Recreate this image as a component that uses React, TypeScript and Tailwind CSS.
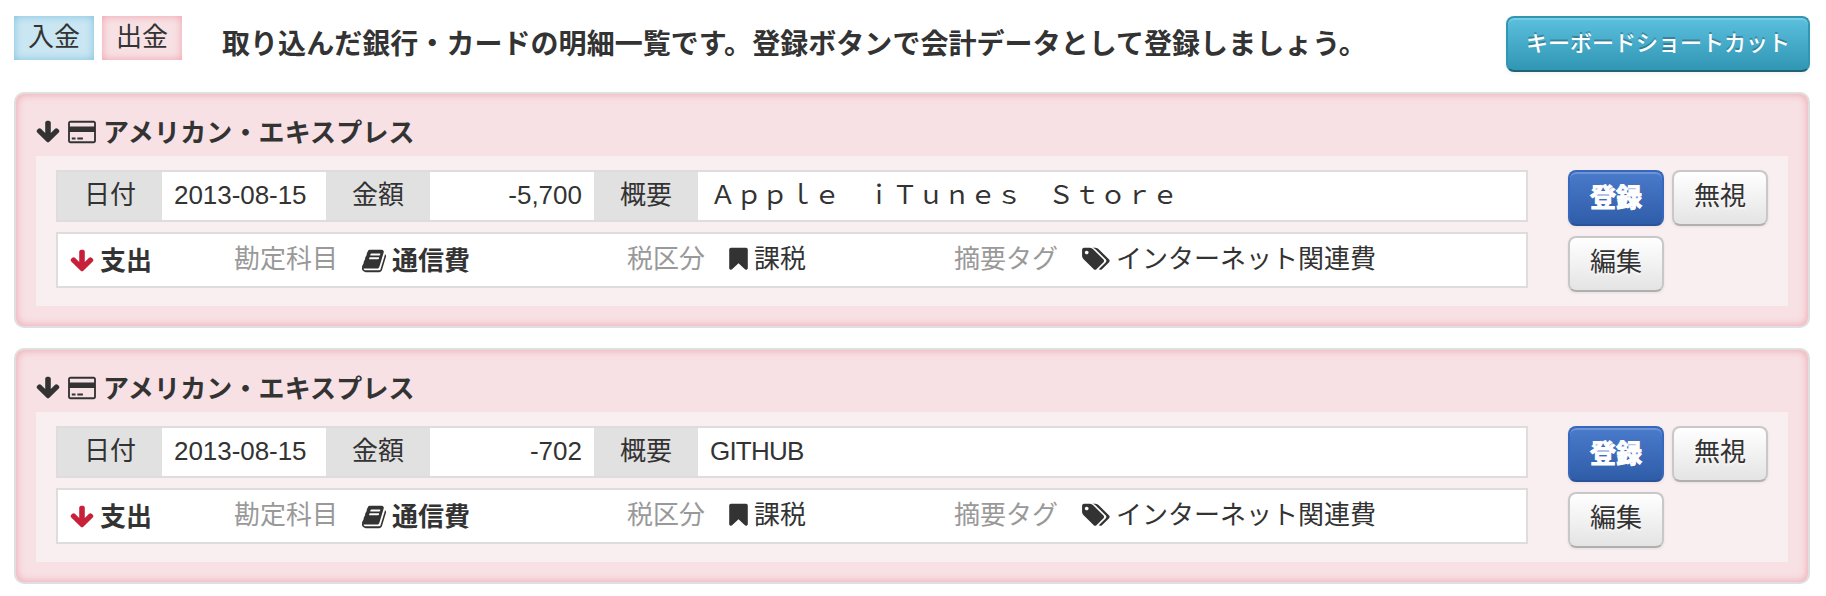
import type { ReactNode } from "react";

type IconProps = { className?: string };

function ArrowDownIcon({ className }: IconProps) {
  return (
    <svg viewBox="0 0 1792 1792" fill="currentColor" className={className}>
      <path d="M1675 832q0 53-37 90l-651 652q-39 37-91 37-53 0-90-37l-651-652q-38-36-38-90 0-53 38-91l74-75q39-37 91-37 53 0 90 37l294 294v-704q0-52 38-90t90-38h128q52 0 90 38t38 90v704l294-294q37-37 90-37 52 0 91 37l75 75q37 39 37 91z" />
    </svg>
  );
}

function CreditCardIcon({ className }: IconProps) {
  return (
    <svg viewBox="0 0 1920 1792" fill="currentColor" className={className}>
      <path d="M1760 128q66 0 113 47t47 113v1216q0 66-47 113t-113 47h-1600q-66 0-113-47t-47-113v-1216q0-66 47-113t113-47h1600zm-1600 128q-13 0-22.500 9.500t-9.500 22.500v224h1664v-224q0-13-9.500-22.500t-22.500-9.500h-1600zm1600 1280q13 0 22.500-9.500t9.500-22.500v-608h-1664v608q0 13 9.500 22.500t22.500 9.500h1600zm-1504-128v-128h256v128h-256zm384 0v-128h384v128h-384z" />
    </svg>
  );
}

function BookIcon({ className }: IconProps) {
  return (
    <svg viewBox="0 0 1792 1792" fill="currentColor" className={className}>
      <path d="M1703 478q40 57 18 129l-275 906q-19 64-76.500 107.500t-122.500 43.500h-923q-77 0-148.500-53.500t-99.500-131.500q-24-67-2-127 0-4 3-27t4-37q1-8-3-21.500t-3-19.500q2-11 8-21t16.500-23.500 16.500-23.500q23-38 45-91.500t30-91.500q3-10 .5-30t-.5-28q3-11 17-28t17-23q21-36 42-92t25-90q1-9-2.500-32t.5-28q4-13 22-30.500t22-22.500q19-26 42.500-84.500t27.500-96.500q1-8-3-25.500t-2-26.500q2-8 9-18t18-23 17-21q8-12 16.500-30.500t15-35 16-36 19.500-32 26.500-23.500 36-11.500 47.500 5.500l-1 3q38-9 51-9h761q74 0 114 56t18 130l-274 906q-36 119-71.500 153.500t-128.500 34.500h-869q-27 0-38 15-11 16-1 43 24 70 144 70h923q29 0 56-15.500t35-41.500l300-987q7-22 5-57 38 15 59 43zm-1064 2q-4 13 2 22.500t20 9.500h608q13 0 25.500-9.500t16.500-22.500l21-64q4-13-2-22.500t-20-9.500h-608q-13 0-25.500 9.500t-16.500 22.500zm-83 256q-4 13 2 22.500t20 9.500h608q13 0 25.500-9.500t16.500-22.500l21-64q4-13-2-22.500t-20-9.500h-608q-13 0-25.500 9.500t-16.500 22.500z" />
    </svg>
  );
}

function BookmarkIcon({ className }: IconProps) {
  return (
    <svg viewBox="256 0 1280 1792" fill="currentColor" className={className}>
      <path d="M1420 128q23 0 44 9 33 13 52.500 41t19.500 62v1289q0 34-19.500 62t-52.500 41q-19 8-44 8-48 0-83-32l-441-424-441 424q-36 33-83 33-23 0-44-9-33-13-52.500-41t-19.500-62v-1289q0-34 19.500-62t52.500-41q21-9 44-9h1048z" />
    </svg>
  );
}

function TagsIcon({ className }: IconProps) {
  return (
    <svg viewBox="128 0 1920 1792" fill="currentColor" className={className}>
      <path d="M576 448q0-53-37.500-90.500t-90.500-37.500-90.500 37.500-37.500 90.500 37.500 90.500 90.500 37.500 90.500-37.500 37.500-90.500zm1067 576q0 53-37 90l-491 492q-39 37-91 37-53 0-90-37l-715-716q-38-37-64.500-101t-26.500-117v-416q0-52 38-90t90-38h416q53 0 117 26.500t102 64.500l715 714q37 39 37 91zm384 0q0 53-37 90l-491 492q-39 37-91 37-36 0-59-14t-53-45l470-470q37-37 37-90 0-52-37-91l-715-714q-38-38-102-64.500t-117-26.500h224q53 0 117 26.500t102 64.500l715 714q37 39 37 91z" />
    </svg>
  );
}

function HeaderCell({ children }: { children: ReactNode }) {
  return (
    <div className="flex w-[104px] shrink-0 justify-center bg-[#e1e1e1] leading-[46px]">
      {children}
    </div>
  );
}

function PlainButton({ children }: { children: ReactNode }) {
  return (
    <button className="flex h-14 w-24 justify-center rounded-lg border-2 border-[#c8c8c8] border-b-[#b0b0b0] bg-linear-to-b from-white to-[#e4e4e4] leading-[48px] shadow-[0_1px_3px_rgba(0,0,0,0.08)] [text-shadow:0_2px_2px_rgba(255,255,255,0.75)]">
      {children}
    </button>
  );
}

type Entry = { date: string; amount: string; summary: string };

const entries: Entry[] = [
  { date: "2013-08-15", amount: "-5,700", summary: "Ａｐｐｌｅ　ｉＴｕｎｅｓ　Ｓｔｏｒｅ" },
  { date: "2013-08-15", amount: "-702", summary: "GITHUB" },
];

function EntryCard({ entry }: { entry: Entry }) {
  return (
    <section className="h-[236px] rounded-[10px] border-2 border-[#dfdfdf] bg-[#f7e1e4] px-5 pb-5 shadow-[inset_0_0_8px_#f09fab]">
      <h2 className="flex h-[62px] items-start pt-[18px] font-bold leading-[42px]">
        <ArrowDownIcon className="mt-[7px] h-[26px] w-[26px] -ml-px" />
        <CreditCardIcon className="mt-[7px] ml-[7px] h-[26px] w-7" />
        <span className="ml-[7px] tracking-[0.15px]">アメリカン・エキスプレス</span>
      </h2>
      <div className="flex h-[150px] bg-[#f9eff1] pl-5 pt-[14px]">
        <div className="w-[1472px] shrink-0">
          <div className="flex h-[52px] border-2 border-[#dddddd] bg-white">
            <HeaderCell>日付</HeaderCell>
            <div className="w-[164px] pl-3 leading-[46px] tracking-[-0.05px]">{entry.date}</div>
            <HeaderCell>金額</HeaderCell>
            <div className="w-[164px] pr-3 text-right leading-[46px]">{entry.amount}</div>
            <HeaderCell>概要</HeaderCell>
            <div className="grow pl-3 leading-[46px]">
              <span className={entry.summary === "GITHUB" ? "tracking-[-0.8px]" : ""}>{entry.summary}</span>
            </div>
          </div>
          <div className="mt-[10px] flex h-14 border-2 border-[#dddddd] bg-white leading-[50px]">
            <div className="flex w-[176px] pl-[11px] font-bold leading-[54px]">
              <ArrowDownIcon className="mt-[14px] h-[26px] w-[26px] text-[#c9203a]" />
              <span className="ml-[5px]">支出</span>
            </div>
            <div className="flex w-[393px]">
              <span className="text-[#999999]">勘定科目</span>
              <BookIcon className="mt-[14px] ml-[23px] h-[26px] w-[26px]" />
              <span className="ml-[5px] font-bold leading-[54px]">通信費</span>
            </div>
            <div className="flex w-[327px]">
              <span className="text-[#999999]">税区分</span>
              <BookmarkIcon className="mt-3 ml-6 h-[26px] w-[19px]" />
              <span className="ml-[6px]">課税</span>
            </div>
            <div className="flex">
              <span className="text-[#999999]">摘要タグ</span>
              <TagsIcon className="mt-3 ml-6 h-[26px] w-7" />
              <span className="ml-[6px]">インターネット関連費</span>
            </div>
          </div>
        </div>
        <div className="ml-10 flex w-[200px] flex-wrap content-start gap-x-2 gap-y-[10px]">
          <button className="h-14 w-24 rounded-lg border-2 border-[#3669bd] border-b-[#2a539b] bg-linear-to-b from-[#4a7acb] to-[#305da8] font-bold leading-[52px] text-white shadow-[inset_0_2px_0_rgba(255,255,255,0.2),0_1px_3px_rgba(0,0,0,0.08)] [-webkit-text-stroke:1px_white]">
            登録
          </button>
          <PlainButton>無視</PlainButton>
          <PlainButton>編集</PlainButton>
        </div>
      </div>
    </section>
  );
}

export default function App() {
  return (
    <main className="h-[596px] bg-white px-4 pl-[14px] pt-4 font-['Liberation_Sans','Noto_Sans_CJK_JP',sans-serif] text-[26px] text-[#333333]">
      <header className="flex h-[76px] items-start whitespace-nowrap">
        <span className="h-11 w-20 bg-[#cae6f2] text-center leading-[42px] shadow-[inset_0_0_8px_#7fc1df]">
          入金
        </span>
        <span className="ml-2 h-11 w-20 bg-[#f7e1e4] text-center leading-[42px] shadow-[inset_0_0_8px_#f09fab]">
          出金
        </span>
        <h1 className="ml-10 text-[28px] font-bold leading-[58px] tracking-[0.05px]">
          取り込んだ銀行・カードの明細一覧です。登録ボタンで会計データとして登録しましょう。
        </h1>
        <button className="ml-auto h-14 w-[304px] rounded-lg border-2 border-[#2f96b4] border-b-[#1f6377] bg-linear-to-b from-[#5bc0de] to-[#2f96b4] text-[22px] font-medium leading-[50px] text-white shadow-[inset_0_2px_0_rgba(255,255,255,0.2),0_2px_4px_rgba(0,0,0,0.05)] [text-shadow:0_-2px_0_rgba(0,0,0,0.25)]">
          キーボードショートカット
        </button>
      </header>
      <div className="flex flex-col gap-5">
        {entries.map((entry) => (
          <EntryCard key={entry.summary} entry={entry} />
        ))}
      </div>
    </main>
  );
}
